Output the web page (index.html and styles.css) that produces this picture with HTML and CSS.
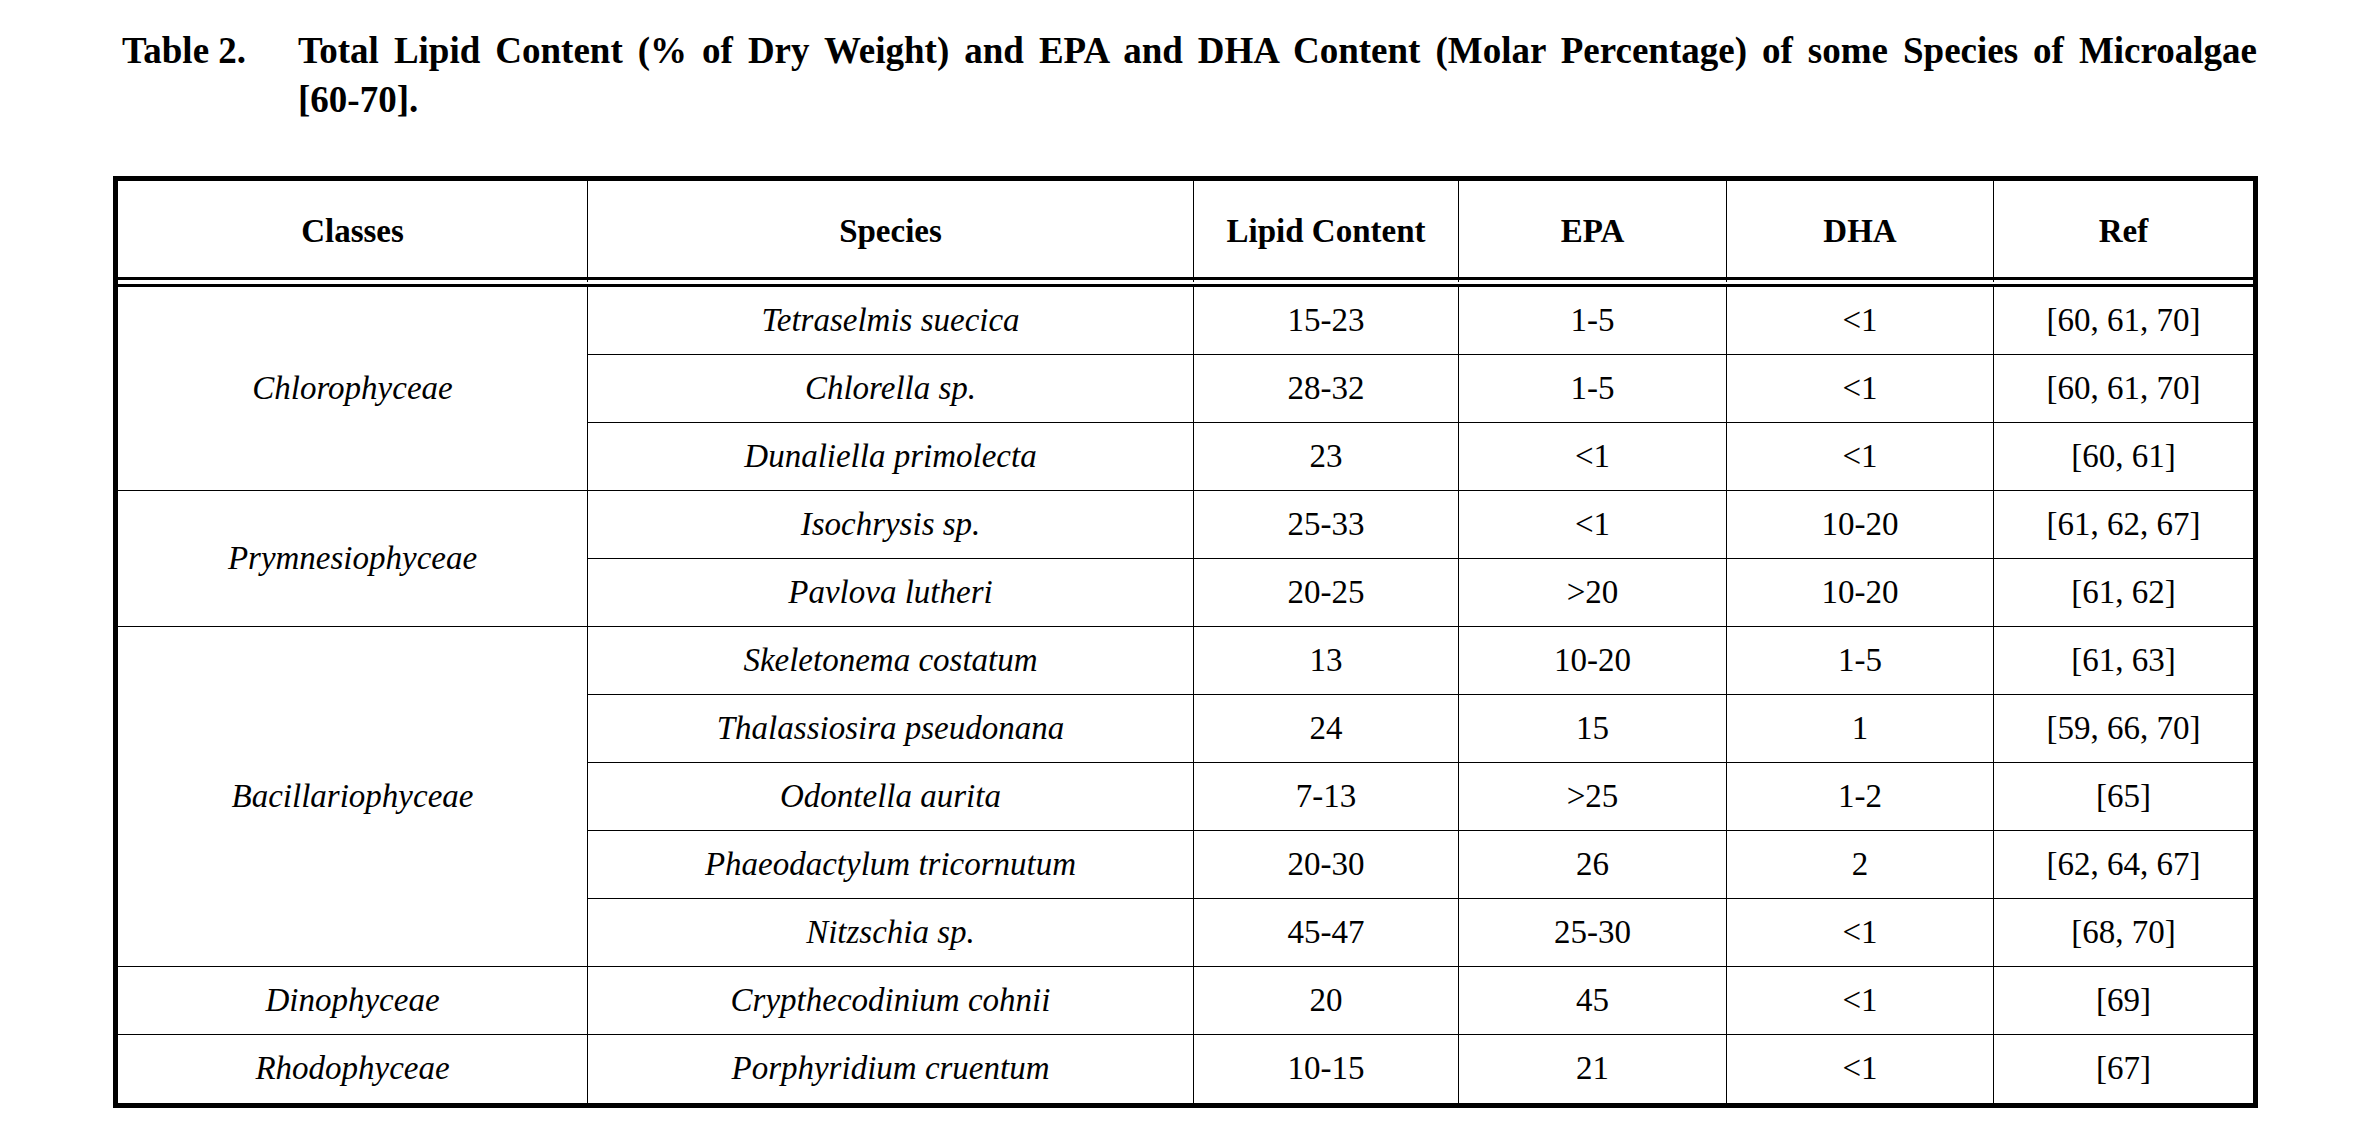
FILE: index.html
```html
<!DOCTYPE html>
<html lang="en">
<head>
<meta charset="utf-8">
<title>Table 2</title>
<link rel="stylesheet" href="styles.css">
</head>
<body>
<div class="caption">
  <div class="label">Table 2.</div>
  <div class="text">
    <div class="line1">Total Lipid Content (% of Dry Weight) and EPA and DHA Content (Molar Percentage) of some Species of Microalgae</div>
    <div class="line2">[60-70].</div>
  </div>
</div>
<table class="data">
  <colgroup>
    <col class="c1"><col class="c2"><col class="c3"><col class="c4"><col class="c5"><col class="c6">
  </colgroup>
  <thead>
    <tr class="head">
      <th>Classes</th><th>Species</th><th>Lipid Content</th><th>EPA</th><th>DHA</th><th>Ref</th>
    </tr>
  </thead>
  <tbody>
    <tr><td class="it" rowspan="3">Chlorophyceae</td><td class="it">Tetraselmis suecica</td><td>15-23</td><td>1-5</td><td>&lt;1</td><td>[60, 61, 70]</td></tr>
    <tr><td class="it">Chlorella sp.</td><td>28-32</td><td>1-5</td><td>&lt;1</td><td>[60, 61, 70]</td></tr>
    <tr><td class="it">Dunaliella primolecta</td><td>23</td><td>&lt;1</td><td>&lt;1</td><td>[60, 61]</td></tr>
    <tr><td class="it" rowspan="2">Prymnesiophyceae</td><td class="it">Isochrysis sp.</td><td>25-33</td><td>&lt;1</td><td>10-20</td><td>[61, 62, 67]</td></tr>
    <tr><td class="it">Pavlova lutheri</td><td>20-25</td><td>&gt;20</td><td>10-20</td><td>[61, 62]</td></tr>
    <tr><td class="it" rowspan="5">Bacillariophyceae</td><td class="it">Skeletonema costatum</td><td>13</td><td>10-20</td><td>1-5</td><td>[61, 63]</td></tr>
    <tr><td class="it">Thalassiosira pseudonana</td><td>24</td><td>15</td><td>1</td><td>[59, 66, 70]</td></tr>
    <tr><td class="it">Odontella aurita</td><td>7-13</td><td>&gt;25</td><td>1-2</td><td>[65]</td></tr>
    <tr><td class="it">Phaeodactylum tricornutum</td><td>20-30</td><td>26</td><td>2</td><td>[62, 64, 67]</td></tr>
    <tr><td class="it">Nitzschia sp.</td><td>45-47</td><td>25-30</td><td>&lt;1</td><td>[68, 70]</td></tr>
    <tr><td class="it">Dinophyceae</td><td class="it">Crypthecodinium cohnii</td><td>20</td><td>45</td><td>&lt;1</td><td>[69]</td></tr>
    <tr class="last"><td class="it">Rhodophyceae</td><td class="it">Porphyridium cruentum</td><td>10-15</td><td>21</td><td>&lt;1</td><td>[67]</td></tr>
  </tbody>
</table>
</body>
</html>
```
FILE: styles.css
```css
html, body {
  margin: 0;
  padding: 0;
  background: #ffffff;
  color: #000000;
  font-family: "Liberation Serif", "Times New Roman", serif;
}

.caption {
  display: grid;
  grid-template-columns: 176px 1959px;
  margin-left: 122px;
  padding-top: 26px;
  font-weight: bold;
  font-size: 37px;
  line-height: 49px;
}

.caption .line1 {
  text-align: justify;
  text-align-last: justify;
  white-space: nowrap;
}

.data {
  margin-top: 52px;
  margin-left: 113px;
  width: 2145px;
  table-layout: fixed;
  border-collapse: separate;
  border-spacing: 0;
  border: 5px solid #000;
  font-size: 33px;
}

.c1 { width: 470px; }
.c2 { width: 606px; }
.c3 { width: 265px; }
.c4 { width: 268px; }
.c5 { width: 267px; }
.c6 { width: 259px; }

.data th,
.data td {
  padding: 0;
  text-align: center;
  vertical-align: middle;
  border-right: 1px solid #000;
  border-bottom: 1px solid #000;
  line-height: 1.15;
  white-space: nowrap;
}

.data th:last-child,
.data td:last-child {
  border-right: none;
}

.data th {
  font-weight: bold;
  padding-top: 5px;
  border-bottom: 10px double #000;
}

.data tr.head {
  height: 106px;
}

.data tbody tr {
  height: 68px;
}

.data tr.last td {
  border-bottom: none;
}

.data td.it {
  font-style: italic;
}
```
